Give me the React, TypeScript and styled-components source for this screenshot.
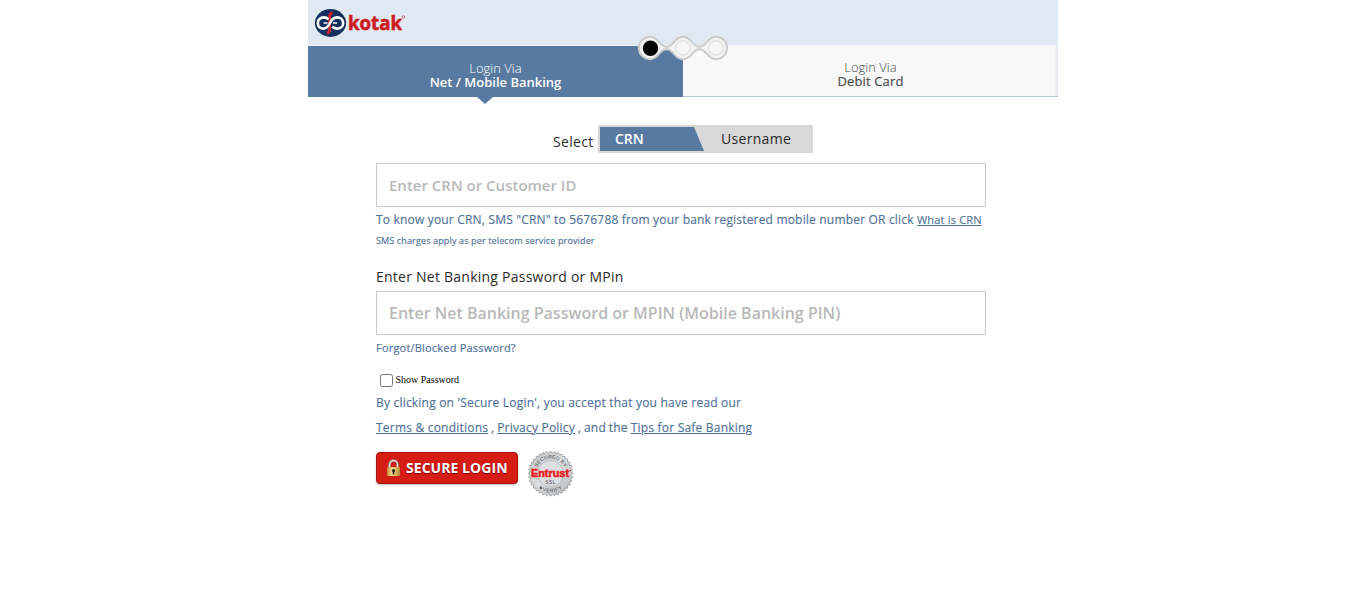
import React from 'react';
import styled, { createGlobalStyle } from 'styled-components';

const Global = createGlobalStyle`
  * { box-sizing: border-box; }
  body { margin: 0; background: #fff; font-family: "Open Sans", sans-serif; color: #2b2b2b; }
`;

const Page = styled.main`
  width: 750px;
  margin: 0 auto;
`;

const Header = styled.header`
  height: 45px;
  padding: 8px 0 0 6px;
  background: #e0e8f1;
`;

const Tabs = styled.nav`
  position: relative;
  display: flex;
  height: 52px;
  padding-top: 1px;
  background: #f1f5fa;
`;

const Tab = styled.a<{ $active?: boolean }>`
  position: relative;
  flex: 1;
  padding-top: ${p => (p.$active ? 15 : 14)}px;
  text-align: center;
  font-size: 13px;
  line-height: 14px;
  color: ${p => (p.$active ? '#fff' : '#4c4c4c')};
  background: ${p =>
    p.$active
      ? '#587aa1'
      : 'linear-gradient(90deg, transparent 371px, #e0e4ea 375px), #f8f8f8'};
  border-bottom: ${p => (p.$active ? '0' : '1px solid #b9c5d3')};

  span { display: block; font-weight: 300; }
  strong {
    display: block;
    font-weight: ${p => (p.$active ? 600 : 400)};
    letter-spacing: ${p => (p.$active ? 0 : 0.15)}px;
    -webkit-text-stroke: ${p => (p.$active ? 0 : 0.2)}px;
  }
`;

const TabPointer = styled.i`
  position: absolute;
  left: 169px;
  top: 51px;
  border: 8px solid transparent;
  border-top: 7px solid #587aa1;
  border-bottom: 0;
`;

const Steps = styled.svg`
  position: absolute;
  left: 329px;
  top: -10px;
`;

const Form = styled.form`
  width: 610px;
  margin-left: 68px;
  padding-top: 28px;
`;

const ModeRow = styled.div`
  display: flex;
  height: 28px;
  margin: 0 0 10px 177px;
`;

const ModeLabel = styled.span`
  width: 45px;
  padding-top: 7px;
  font-size: 14px;
  line-height: 20px;
  letter-spacing: 0.3px;
`;

const Switch = styled.div`
  display: flex;
  width: 215px;
  padding: 2px;
  background: #d8d8d8;
  font-size: 14px;
  line-height: 23px;
`;

const ActiveMode = styled.span`
  width: 104px;
  height: 24px;
  padding-left: 15px;
  color: #fff;
  font-weight: 600;
  background: #587aa1;
  clip-path: polygon(0 0, 94px 0, 104px 100%, 0 100%);
`;

const OtherMode = styled.span`
  padding-left: 17px;
  letter-spacing: 0.3px;
`;

const Field = styled.input<{ $size: number }>`
  display: block;
  width: 610px;
  height: 44px;
  padding: 0 12px;
  border: 1px solid #c8c8c8;
  border-radius: 0;
  font: 600 ${p => p.$size}px "Open Sans", sans-serif;
  outline: none;
  &::placeholder { color: #b9b9b9; opacity: 1; }
`;

const Text = styled.p<{ $size: number; $line: number; $top?: number; $track?: number }>`
  margin: ${p => p.$top ?? 0}px 0 0;
  white-space: nowrap;
  font-size: ${p => p.$size}px;
  line-height: ${p => p.$line}px;
  letter-spacing: ${p => p.$track ?? 0}px;
  color: #507299;
  -webkit-text-stroke: 0.15px;
`;

const Label = styled(Text)`
  margin-bottom: 4px;
  color: #2b2b2b;
  -webkit-text-stroke: 0;
`;

const Terms = styled(Text)`
  word-spacing: -0.5px;

  a { word-spacing: 0; }
`;

const Link = styled.a<{ $size?: number }>`
  color: #507299;
  font-size: ${p => (p.$size ? p.$size + 'px' : 'inherit')};
  text-decoration: underline;
`;

const ShowRow = styled.label`
  display: flex;
  align-items: center;
  height: 13px;
  margin-top: 18px;
  padding-left: 4px;
  font: 10px/13px "Liberation Serif", serif;
  color: #000;

  input { width: 13px; height: 13px; margin: 0 2.5px 0 0; }
  span { position: relative; top: -1px; }
`;

const Actions = styled.div`
  display: flex;
  gap: 10px;
  margin-top: 12px;
`;

const LoginButton = styled.button`
  display: flex;
  align-items: center;
  gap: 5px;
  width: 142px;
  height: 32px;
  padding: 0 0 1px 9px;
  border: 1px solid #a90f0a;
  border-radius: 4px;
  background: #d51c15;
  box-shadow: 0 1px 2px #bbb;
  color: #fff;
  font: 700 14px "Open Sans", sans-serif;
  letter-spacing: 0.05px;
  text-shadow: 0 1px 1px #701;
  white-space: nowrap;
`;

const SealArt = styled.svg`
  margin-top: -1px;
`;

const Logo = () => (
  <svg width="96" height="30" viewBox="0 0 96 30" aria-label="kotak">
    <ellipse cx="16.5" cy="15" rx="15.6" ry="13.9" fill="#15305f" />
    <path d="M18.6 5.2c-2.3 0-3 1.4-3 3.3v13.200c0 2-.6 3.2-2.7 3.2" fill="none" stroke="#d92329" strokeWidth="2.8" />
    <path
      d="M14.6 11.3C13.3 10 11.6 9.4 9.8 9.4c-3.5 0-6 2.4-6 5.6s2.3 5.6 5.5 5.6c3 0 4.8-1.8 6.7-5.6s3.9-5.6 7-5.6c3.5 0 6.2 2.4 6.2 5.6s-2.7 5.6-6.2 5.6c-1.9 0-3.5-.6-4.7-1.9"
      fill="none" stroke="#fff" strokeWidth="2.6"
    />
    <path d="M9.5 15h4M19 15h4" stroke="#fff" strokeWidth="1.4" />
    <text x="34" y="21.7" fill="#cc1c22" stroke="#cc1c22" strokeWidth=".6" fontFamily="Open Sans" fontSize="19" fontWeight="700" textLength="54" lengthAdjust="spacingAndGlyphs">kotak</text>
    <circle cx="89.5" cy="9" r="1.3" fill="none" stroke="#cc5a65" strokeWidth=".8" />
  </svg>
);

const Progress = () => (
  <Steps width="92" height="26" viewBox="0 0 92 26">
    <path
      d="M13 1.8C22 1.8 22 11.8 29.5 11.8S37 1.8 46 1.8S55 11.8 62.5 11.8S70 1.8 79 1.8A11.2 11.2 0 0 1 79 24.2C70 24.2 70 14.2 62.5 14.2S55 24.2 46 24.2S37 14.2 29.5 14.2S22 24.2 13 24.2A11.2 11.2 0 0 1 13 1.8Z"
      fill="#f3f3f3" stroke="#cbcbcb" strokeWidth="1.9"
    />
    <circle cx="13.5" cy="13.3" r="7.7" fill="#000" />
    <circle cx="46" cy="13" r="7.2" fill="#f7f7f7" stroke="#e2e2e2" strokeWidth="1.4" />
    <circle cx="79" cy="13" r="7.2" fill="#f7f7f7" stroke="#e2e2e2" strokeWidth="1.4" />
  </Steps>
);

const Lock = () => (
  <svg width="15" height="18" viewBox="0 0 15 18">
    <defs>
      <linearGradient id="brass">
        <stop stopColor="#bd8c31" />
        <stop offset=".4" stopColor="#f8de91" />
        <stop offset="1" stopColor="#b9852a" />
      </linearGradient>
    </defs>
    <path d="M3.5 9V5.5a4 4 0 0 1 8 0V9" fill="none" stroke="#8c7770" strokeWidth="2.6" />
    <path d="M3.5 9V5.5a4 4 0 0 1 8 0V9" fill="none" stroke="#e4ded8" strokeWidth="1.4" />
    <rect x="1" y="8" width="13" height="9" rx="1" fill="url(#brass)" />
    <circle cx="7.5" cy="11.5" r="1.5" fill="#2c2110" />
    <path d="M7.5 11.5v4" stroke="#2c2110" strokeWidth="1.6" />
  </svg>
);

const Seal = () => {
  const points = Array.from({ length: 72 }, (_, i) => {
    const r = i % 2 ? 20.4 : 22.6;
    const a = (i * Math.PI) / 36;
    return `${22.6 + r * Math.cos(a)},${22.6 + r * Math.sin(a)}`;
  }).join(' ');
  return (
    <SealArt width="46" height="46" viewBox="0 0 46 46">
      <defs>
        <linearGradient id="silver" x2="1" y2="1">
          <stop stopColor="#c2c4c6" />
          <stop offset=".5" stopColor="#dddedf" />
          <stop offset="1" stopColor="#b4b6b8" />
        </linearGradient>
        <path id="upper" d="M7.6 22.6a15 15 0 0 1 30 0" />
        <path id="lower" d="M3.8 22.6a18.8 18.8 0 0 0 37.6 0" />
      </defs>
      <polygon points={points} fill="url(#silver)" stroke="#898b8e" strokeWidth=".7" />
      <circle cx="22.6" cy="22.6" r="13" fill="#dedfe0" stroke="#a5a7a9" strokeWidth=".6" />
      <g fill="#4b4d50" fontFamily="Liberation Sans" fontSize="5.2" textAnchor="middle">
        <text><textPath href="#upper" startOffset="50%">SECURED BY</textPath></text>
        <text letterSpacing=".5"><textPath href="#lower" startOffset="50%">★VERIFY</textPath></text>
        <text x="22.6" y="32.5" fontSize="5" letterSpacing=".4">SSL</text>
      </g>
      <text x="3" y="26" fill="#e91c24" stroke="#e91c24" strokeWidth=".6" fontFamily="Liberation Sans" fontWeight="700" fontSize="11" textLength="38" lengthAdjust="spacingAndGlyphs">Entrust</text>
      <circle cx="42.2" cy="19.5" r=".7" fill="#e91c24" />
    </SealArt>
  );
};

export default function App() {
  return (
    <>
      <Global />
      <Page>
        <Header><Logo /></Header>
        <Tabs>
          <Tab $active>
            <span>Login Via</span>
            <strong>Net / Mobile Banking</strong>
            <TabPointer />
          </Tab>
          <Tab>
            <span>Login Via</span>
            <strong>Debit Card</strong>
          </Tab>
          <Progress />
        </Tabs>
        <Form>
          <ModeRow>
            <ModeLabel>Select</ModeLabel>
            <Switch>
              <ActiveMode>CRN</ActiveMode>
              <OtherMode>Username</OtherMode>
            </Switch>
          </ModeRow>
          <Field $size={15} placeholder="Enter CRN or Customer ID" />
          <Text $size={12} $line={20} $top={3} $track={0.185}>
            To know your CRN, SMS "CRN" to 5676788 from your bank registered mobile number OR click <Link $size={11}>What is CRN</Link>
          </Text>
          <Text $size={9} $line={14} $top={4} $track={0.14}>SMS charges apply as per telecom service provider</Text>
          <Label $size={14} $line={20} $top={19} $track={0.24}>Enter Net Banking Password or MPin</Label>
          <Field $size={16} placeholder="Enter Net Banking Password or MPIN (Mobile Banking PIN)" />
          <Text $size={11} $line={16} $top={5} $track={0.2}>Forgot/Blocked Password?</Text>
          <ShowRow><input type="checkbox" /><span>Show Password</span></ShowRow>
          <Text $size={12} $line={25} $top={3} $track={0.2}>By clicking on 'Secure Login', you accept that you have read our</Text>
          <Terms $size={12} $line={25} $track={0.21}>
            <Link>Terms &amp; conditions</Link> , <Link>Privacy Policy</Link> , and the <Link>Tips for Safe Banking</Link>
          </Terms>
          <Actions>
            <LoginButton type="button"><Lock />SECURE LOGIN</LoginButton>
            <Seal />
          </Actions>
        </Form>
      </Page>
    </>
  );
}
